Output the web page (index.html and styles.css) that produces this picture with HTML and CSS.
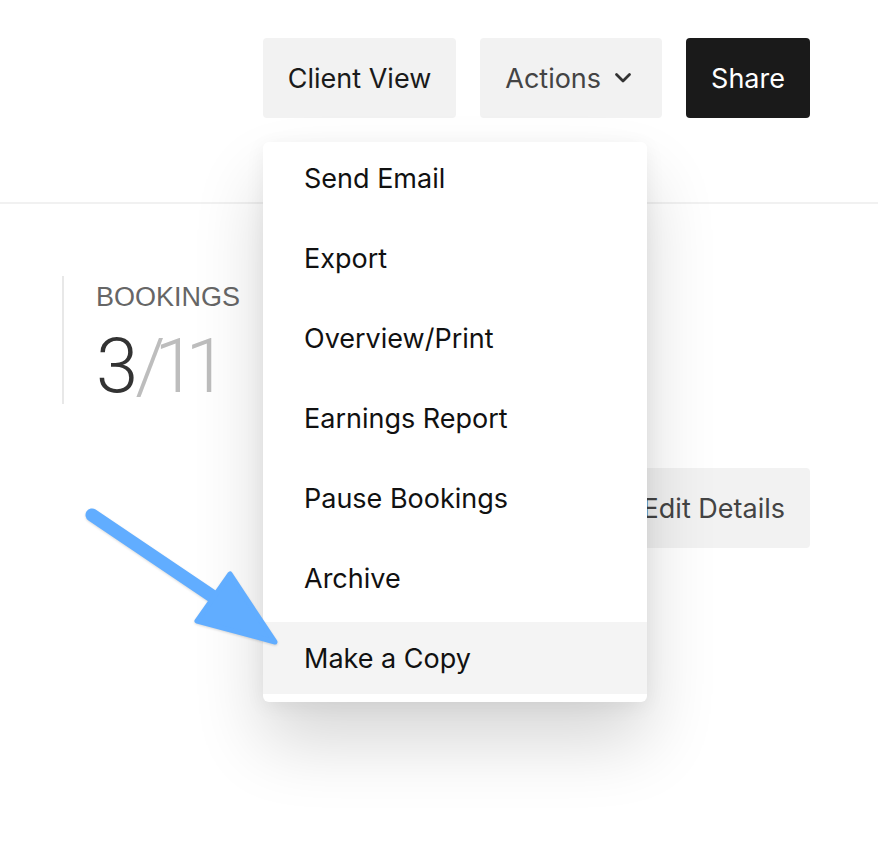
FILE: index.html
```html
<!DOCTYPE html>
<html lang="en">
<head>
  <meta charset="UTF-8" />
  <meta name="viewport" content="width=device-width, initial-scale=1.0"/>
  <title>Event</title>
  <link rel="stylesheet" href="styles.css">
</head>
<body>
  <div class="page">
    <header class="topbar">
      <button class="btn">Client View</button>
      <button class="btn btn-muted">Actions
        <svg class="chevron" width="20" height="20" viewBox="0 0 20 20"><path d="M3.5 6.5 L10 13 L16.5 6.5" fill="none" stroke="#333" stroke-width="2.8" stroke-linecap="round" stroke-linejoin="round"/></svg>
      </button>
      <button class="btn btn-dark">Share</button>
    </header>

    <section class="stats">
      <div class="stats-label">BOOKINGS</div>
      <div class="stats-value">3<span class="stats-total">/11</span></div>
    </section>

    <div class="edit-row">
      <button class="btn btn-muted">Edit Details</button>
    </div>

    <!-- menu opened from the Actions button -->
    <ul class="menu">
      <li>Send Email</li>
      <li>Export</li>
      <li>Overview/Print</li>
      <li>Earnings Report</li>
      <li>Pause Bookings</li>
      <li>Archive</li>
      <li class="active">Make a Copy</li>
    </ul>

    <svg class="pointer" width="210" height="160" viewBox="0 0 210 160">
      <line x1="12" y1="15" x2="138" y2="100" stroke="#61adff" stroke-width="13" stroke-linecap="round"/>
      <polygon points="150,74 117,121 195,142" fill="#61adff" stroke="#61adff" stroke-width="5" stroke-linejoin="round"/>
    </svg>
  </div>
</body>
</html>
```

FILE: styles.css
```css
body {
  margin: 0;
  background: #fff;
  font-family: Inter, "Noto Sans", sans-serif;
  color: #1a1a1a;
}
.page {
  position: relative;
  width: 878px;
  height: 850px;
  overflow: hidden;
}
.topbar {
  display: flex;
  justify-content: flex-end;
  align-items: flex-start;
  gap: 24px;
  height: 204px;
  box-sizing: border-box;
  padding: 38px 68px 0 0;
  border-bottom: 2px solid #f1f1f1;
}
.btn {
  display: flex;
  align-items: center;
  height: 80px;
  padding: 0 25px;
  border: none;
  border-radius: 4px;
  background: #f2f2f2;
  color: #1a1a1a;
  font-family: inherit;
  font-size: 27px;
  cursor: pointer;
}
.btn-muted {
  color: #444;
}
.btn-dark {
  background: #1a1a1a;
  color: #fff;
}
.chevron {
  margin-left: 12px;
  margin-right: 4px;
}
.stats {
  margin: 72px 0 0 62px;
  height: 128px;
  box-sizing: border-box;
  border-left: 2px solid #e8e8e8;
  padding: 6px 0 0 32px;
  font-family: Roboto, "Liberation Sans", sans-serif;
}
.stats-label {
  font-family: "Liberation Sans", Arial, sans-serif;
  font-size: 27px;
  line-height: 30px;
  color: #666;
}
.stats-value {
  margin-top: 16px;
  font-size: 76px;
  font-weight: 300;
  line-height: 76px;
  color: #333;
  letter-spacing: -3px;
}
.stats-total {
  color: #bdbdbd;
  letter-spacing: -11px;
}
.edit-row {
  display: flex;
  justify-content: flex-end;
  padding-right: 68px;
  margin-top: 64px;
}
.edit-row .btn {
  padding: 0 25px 0 60px;
}
.menu {
  position: absolute;
  top: 142px;
  left: 263px;
  width: 384px;
  margin: 0;
  padding: 0 0 8px;
  list-style: none;
  background: #fff;
  border-radius: 6px;
  box-shadow: 0 40px 70px rgba(0, 0, 0, 0.16), 0 4px 20px rgba(0, 0, 0, 0.06);
}
.menu li {
  display: flex;
  align-items: center;
  height: 72px;
  margin-bottom: 8px;
  padding-left: 41px;
  font-size: 27px;
  color: #111;
}
.menu li:last-child {
  margin-bottom: 0;
}
.menu li.active {
  background: #f4f4f4;
}
.pointer {
  position: absolute;
  left: 80px;
  top: 500px;
  filter: drop-shadow(0 1px 1px rgba(0, 0, 0, 0.15));
}
```
